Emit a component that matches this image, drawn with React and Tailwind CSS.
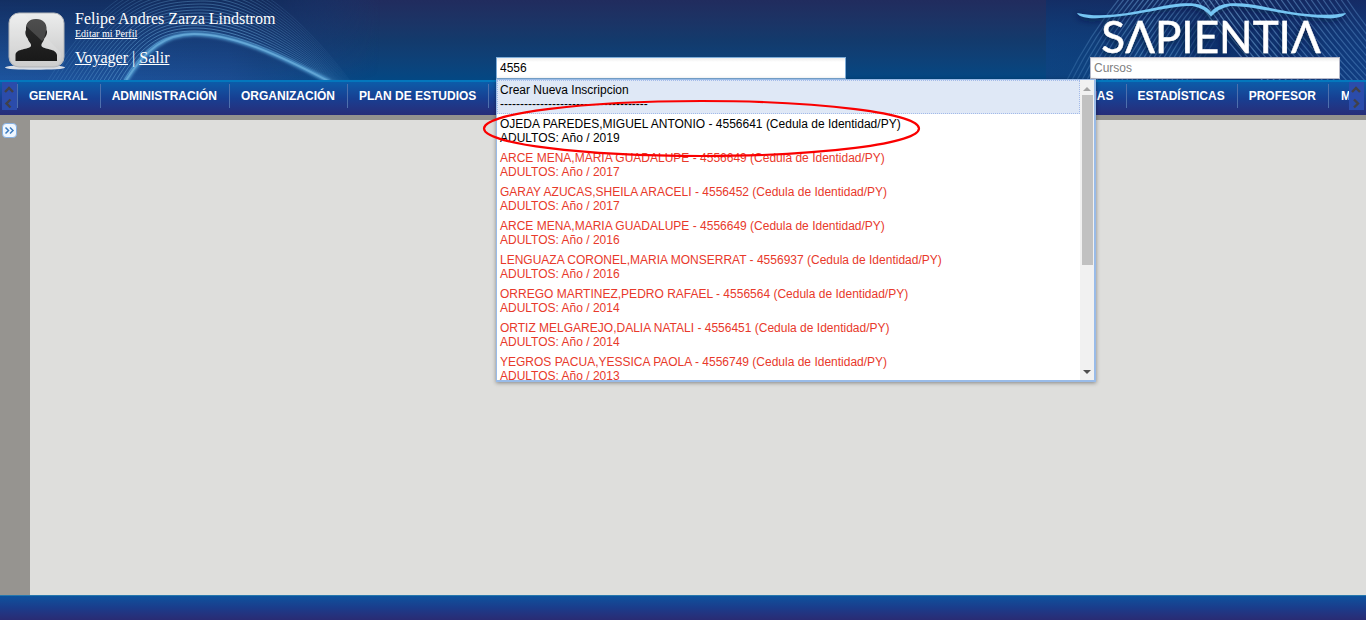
import React from "react";

const results = [
  ["OJEDA PAREDES,MIGUEL ANTONIO - 4556641 (Cedula de Identidad/PY)", "ADULTOS: Año / 2019", true],
  ["ARCE MENA,MARIA GUADALUPE - 4556649 (Cedula de Identidad/PY)", "ADULTOS: Año / 2017"],
  ["GARAY AZUCAS,SHEILA ARACELI - 4556452 (Cedula de Identidad/PY)", "ADULTOS: Año / 2017"],
  ["ARCE MENA,MARIA GUADALUPE - 4556649 (Cedula de Identidad/PY)", "ADULTOS: Año / 2016"],
  ["LENGUAZA CORONEL,MARIA MONSERRAT - 4556937 (Cedula de Identidad/PY)", "ADULTOS: Año / 2016"],
  ["ORREGO MARTINEZ,PEDRO RAFAEL - 4556564 (Cedula de Identidad/PY)", "ADULTOS: Año / 2014"],
  ["ORTIZ MELGAREJO,DALIA NATALI - 4556451 (Cedula de Identidad/PY)", "ADULTOS: Año / 2014"],
  ["YEGROS PACUA,YESSICA PAOLA - 4556749 (Cedula de Identidad/PY)", "ADULTOS: Año / 2013"],
];

function WaveLeft() {
  const lines = Array.from({ length: 20 }, (_, i) => i);
  return (
    <svg aria-hidden="true" className="absolute left-0 top-0 h-20 w-[380px]" viewBox="0 0 380 80">
      <defs>
        <linearGradient id="fadeLeft" x1="0" x2="1">
          <stop offset="0" stopColor="#1d559f" />
          <stop offset="0.6" stopColor="#1b4d92" />
          <stop offset="1" stopColor="#1b4585" stopOpacity="0" />
        </linearGradient>
        <linearGradient id="shadeLeft" x1="0" y1="0" x2="0" y2="1">
          <stop offset="0" stopColor="#10234f" stopOpacity="0.75" />
          <stop offset="1" stopColor="#10234f" stopOpacity="0" />
        </linearGradient>
        <linearGradient id="edgeFade" x1="0" x2="1">
          <stop offset="0.7" stopColor="#fff" />
          <stop offset="1" stopColor="#000" />
        </linearGradient>
        <mask id="edgeMask"><rect width="380" height="80" fill="url(#edgeFade)" /></mask>
        <linearGradient id="lineFade" gradientUnits="userSpaceOnUse" x1="60" y1="0" x2="350" y2="0">
          <stop offset="0" stopColor="#6cacdc" stopOpacity="0.7" />
          <stop offset="0.6" stopColor="#6cacdc" stopOpacity="0.95" />
          <stop offset="1" stopColor="#6cacdc" stopOpacity="0.2" />
        </linearGradient>
        <filter id="glow"><feGaussianBlur stdDeviation="1.6" /></filter>
      </defs>
      <rect width="380" height="80" fill="url(#fadeLeft)" />
      <rect width="380" height="80" fill="url(#shadeLeft)" mask="url(#edgeMask)" />
      <g fill="none" stroke="url(#lineFade)">
        {lines.map((i) => (
          <path
            key={i}
            strokeWidth="1"
            strokeOpacity={0.65 - i * 0.022}
            d={`M${123 - i * 4} 82C${145 - i * 2} ${44 - i * 3} ${165 - i} ${34 - i * 3} ${194 + i} ${34 - i * 3}C${235 + i} ${34 - i * 3} ${285 + i} ${58 - i * 2} ${332 + i} 82`}
          />
        ))}
      </g>
      <path d="M125 82C146 48 166 34 194 34C235 34 283 57 330 82" fill="none" stroke="#55a0d5" strokeWidth="4" filter="url(#glow)" />
      <path d="M125 82C146 48 166 34 194 34C235 34 283 57 330 82" fill="none" stroke="#7dbbe2" strokeWidth="1.8" strokeOpacity="0.45" />
    </svg>
  );
}

function WaveRight() {
  const lines = Array.from({ length: 26 }, (_, i) => i);
  return (
    <svg aria-hidden="true" className="absolute right-0 top-0 h-20 w-[320px]" viewBox="0 0 320 80">
      <defs>
        <linearGradient id="baseRight" x1="0" x2="1">
          <stop offset="0" stopColor="#0e427f" />
          <stop offset="0.3" stopColor="#0f3d7a" />
          <stop offset="0.6" stopColor="#0c2b66" />
          <stop offset="1" stopColor="#123a80" />
        </linearGradient>
        <linearGradient id="topShade" x1="0" y1="0" x2="0" y2="1">
          <stop offset="0" stopColor="#16255a" stopOpacity="0.7" />
          <stop offset="1" stopColor="#0b4a8a" stopOpacity="0.2" />
        </linearGradient>
        <linearGradient id="hatchLeft" gradientUnits="userSpaceOnUse" x1="20" y1="0" x2="190" y2="0">
          <stop offset="0" stopColor="#6ba6da" stopOpacity="0.2" />
          <stop offset="0.5" stopColor="#6ba6da" stopOpacity="0.55" />
          <stop offset="1" stopColor="#6ba6da" stopOpacity="0" />
        </linearGradient>
        <linearGradient id="hatchRight" gradientUnits="userSpaceOnUse" x1="170" y1="0" x2="320" y2="0">
          <stop offset="0" stopColor="#7fb4e2" stopOpacity="0.6" />
          <stop offset="1" stopColor="#5c91cb" stopOpacity="0.4" />
        </linearGradient>
      </defs>
      <rect width="320" height="80" fill="url(#baseRight)" />
      <rect width="320" height="80" fill="url(#topShade)" />
      <g fill="none" stroke="url(#hatchLeft)" strokeWidth="1.2">
        {lines.map((i) => (
          <path key={i} d={`M${20 + i * 5} 82Q${44 + i * 5} 34 ${74 + i * 5} -2`} />
        ))}
      </g>
      <g fill="none" stroke="url(#hatchRight)" strokeWidth="1.2">
        {lines.map((i) => (
          <path key={i} d={`M${150 + i * 6} -2Q${180 + i * 6} 42 ${218 + i * 6} 82`} />
        ))}
      </g>
    </svg>
  );
}

function Avatar() {
  return (
    <svg role="img" aria-label="Perfil" className="h-[62px] w-[62px] shrink-0" viewBox="0 0 62 62">
      <defs>
        <linearGradient id="tile" x1="0" y1="0" x2="0" y2="1">
          <stop offset="0" stopColor="#eceded" />
          <stop offset="1" stopColor="#c6c6c6" />
        </linearGradient>
        <linearGradient id="person" x1="0" y1="0" x2="0" y2="1">
          <stop offset="0" stopColor="#2c2c2c" />
          <stop offset="1" stopColor="#191919" />
        </linearGradient>
      </defs>
      <ellipse cx="31" cy="58.5" rx="30" ry="2.3" fill="#d8dde5" />
      <rect x="5" y="4" width="55" height="54" rx="10" fill="url(#tile)" stroke="#b4b7bb" />
      <path d="M6 14Q6 5 16 5H20L57 44V48Q57 57 48 57H16Q7 57 6 48Z" fill="#fff" fillOpacity="0.12" />
      <path
        d="M32 10C39 10 43 14 42.500 21C44 23 42 28 40.500 29C39 34 37 34 37.500 37C40 41 52 39 53 46V52H11.500V46C12 39 25 41 27 37C27.500 34 25 34 23.500 29C22 28 20.500 23 22 21C21.500 14 25 10 32 10Z"
        fill="url(#person)"
      />
      <path d="M22 17Q25 10 32 10Q42 10 42.500 20L40 30L38 32Z" fill="#fff" fillOpacity="0.16" />
    </svg>
  );
}

function Logo() {
  return (
    <svg role="img" aria-label="Sapientia" className="h-[57px] w-[276px] overflow-visible" viewBox="0 0 276 57">
      <defs>
        <filter id="logoShadow" x="-10%" y="-20%" width="120%" height="150%">
          <feDropShadow dx="-1" dy="2" stdDeviation="3" floodColor="#04143c" floodOpacity="0.9" />
        </filter>
      </defs>
      <g filter="url(#logoShadow)">
        <path
          d="M1 13C24 18 50 14 78 8C105 2 126 0 135 12C144 0 167 2 194 8C222 14 246 17 270 13C267 19 252 19 236 17C204 14 172 5 154 6Q143 8 135 16.500Q128 8 117 6C98 5 68 14 36 17C20 19 4 19 1 13Z"
          fill="#74c5f3"
        />
        <text
          x="135"
          y="53"
          textAnchor="middle"
          fill="#fff"
          stroke="#fff"
          strokeWidth="0.4"
          fontSize="44"
          fontFamily="Lato, sans-serif"
        >
          SΛPIENTIΛ
        </text>
      </g>
    </svg>
  );
}

function NavItem({ children, first }) {
  return (
    <li className={first ? "border-x border-[#4e70ad] pl-[11px] pr-3" : "border-r border-[#4e70ad] pl-[11px] pr-3"}>
      <a href="#" className="leading-6">{children}</a>
    </li>
  );
}

function ScrollButton({ side }) {
  return (
    <button type="button" aria-label={side === "left" ? "Menú anterior" : "Menú siguiente"} className="flex h-7 w-[15px] shrink-0 items-center justify-center bg-[#2b4cab]">
      <svg className="h-7 w-[15px]" viewBox="0 0 15 28" fill="none" stroke="#414149" strokeWidth="2.4">
        <path d="M3 10L7 6L11 10" />
        {side === "left" ? <path d="M8.500 17.500L4.500 21.500L8.500 25.500" /> : <path d="M5 17.500L9 21.500L5 25.500" />}
      </svg>
    </button>
  );
}

export default function App() {
  return (
    <div className="flex min-h-screen flex-col overflow-x-hidden bg-[#dededc] font-['Liberation_Sans',Arial,sans-serif] text-xs text-black">
      <header className="relative flex h-20 shrink-0 bg-linear-to-b from-[#212c5e] via-[#133a6c] to-[#034884]">
        <WaveLeft />
        <WaveRight />
        <div className="relative flex w-[496px] shrink-0 gap-2 pl-1 pt-[9px] font-['Liberation_Serif','Times_New_Roman',serif] text-base text-white">
          <Avatar />
          <div className="pl-px">
            <p className="leading-5">Felipe Andres Zarza Lindstrom</p>
            <a href="#" className="block text-[10px] leading-[10px] underline">Editar mi Perfil</a>
            <p className="pt-[9px] leading-5">
              <a href="#" className="underline">Voyager</a> | <a href="#" className="underline">Salir</a>
            </p>
          </div>
        </div>

        <div className="relative z-10 mt-[57px] w-[350px] shrink-0">
          <input
            aria-label="Buscar inscripción"
            defaultValue="4556"
            className="block h-[22px] w-full border border-[#7eadd9] bg-linear-to-b from-[#ececec] via-white via-20% to-white px-[3px] outline-none"
          />
          <div className="absolute left-0 top-[22px] flex h-[303px] w-[600px] border-y border-l border-r-2 border-b-2 border-[#99bbe8] bg-white shadow-[0_1px_4px_rgba(0,0,0,0.4)]">
            <ul className="min-w-0 flex-1 overflow-hidden leading-[14px]">
              <li className="border border-dotted border-[#a3bae9] bg-[#dfe8f6] px-0.5 pb-0.5 pt-0.5">
                <p>Crear Nueva Inscripcion</p>
                <p>-------------------------------------</p>
              </li>
              {results.map(([name, course, active]) => (
                <li key={name + course} className={active ? "px-[3px] py-[3px]" : "px-[3px] py-[3px] text-[#e8392b]"}>
                  <p>{name}</p>
                  <p>{course}</p>
                </li>
              ))}
            </ul>
            <div aria-hidden="true" className="flex w-[14px] shrink-0 flex-col items-end bg-[#f1f1f1] pr-px">
              <svg className="h-[15px] w-[13px]" viewBox="0 0 13 15"><path d="M3 11L7 7L11 11Z" fill="#a3a3a3" /></svg>
              <div className="h-[170px] w-[11px] bg-[#c1c1c1]" />
              <svg className="mt-auto h-[15px] w-[13px]" viewBox="0 0 13 15"><path d="M3 5L7 9L11 5Z" fill="#505050" /></svg>
            </div>
          </div>
          <svg aria-hidden="true" className="pointer-events-none absolute -left-3.5 top-[42px] h-[60px] w-[440px]" viewBox="0 0 440 60">
            <ellipse cx="219.500" cy="29.500" rx="217.500" ry="27.500" fill="none" stroke="#fa0000" strokeWidth="2.2" />
          </svg>
        </div>

        <div className="relative ml-auto flex w-[290px] shrink-0 flex-col">
          <Logo />
          <input
            aria-label="Cursos"
            placeholder="Cursos"
            className="relative ml-3.5 block h-[22px] w-[250px] border border-[#b5b8c8] bg-linear-to-b from-[#ececec] via-white via-20% to-white px-[3px] placeholder-[#808080] outline-none"
          />
        </div>
      </header>

      <nav className="flex h-[35px] shrink-0 items-start border-t-2 border-[#0477bd] bg-linear-to-b from-[#0b5ca9] via-[#173f92] to-[#262d79] px-0.5 font-bold text-white">
        <ScrollButton side="left" />
        <ul className="mt-0.5 flex">
          <NavItem first>GENERAL</NavItem>
          <NavItem>ADMINISTRACIÓN</NavItem>
          <NavItem>ORGANIZACIÓN</NavItem>
          <NavItem>PLAN DE ESTUDIOS</NavItem>
        </ul>
        <ul className="ml-auto mt-0.5 flex">
          <NavItem>MAS</NavItem>
          <NavItem>ESTADÍSTICAS</NavItem>
          <NavItem>PROFESOR</NavItem>
          <li className="w-5 overflow-hidden pl-3"><a href="#" className="leading-6">M</a></li>
        </ul>
        <ScrollButton side="right" />
      </nav>

      <main className="flex flex-1 border-t-[5px] border-[#93928e]">
        <aside className="w-[30px] shrink-0 bg-[#969490] pl-0.5 pt-[3px]">
          <button type="button" aria-label="Expandir panel" className="flex h-[15px] w-[15px] items-center justify-center rounded-sm border border-[#86b1e4] bg-[#eef6ff]">
            <svg className="h-[13px] w-[13px]" viewBox="0 0 13 13" fill="none" stroke="#3b7bc0" strokeWidth="1.5">
              <path d="M2.500 3.500L5.500 6.500L2.500 9.500M7 3.500L10 6.500L7 9.500" />
            </svg>
          </button>
        </aside>
      </main>

      <footer className="h-[25px] shrink-0 border-t border-[#2678ad] bg-linear-to-b from-[#0b529e] via-[#1a3c8b] to-[#292b73]" />
    </div>
  );
}
